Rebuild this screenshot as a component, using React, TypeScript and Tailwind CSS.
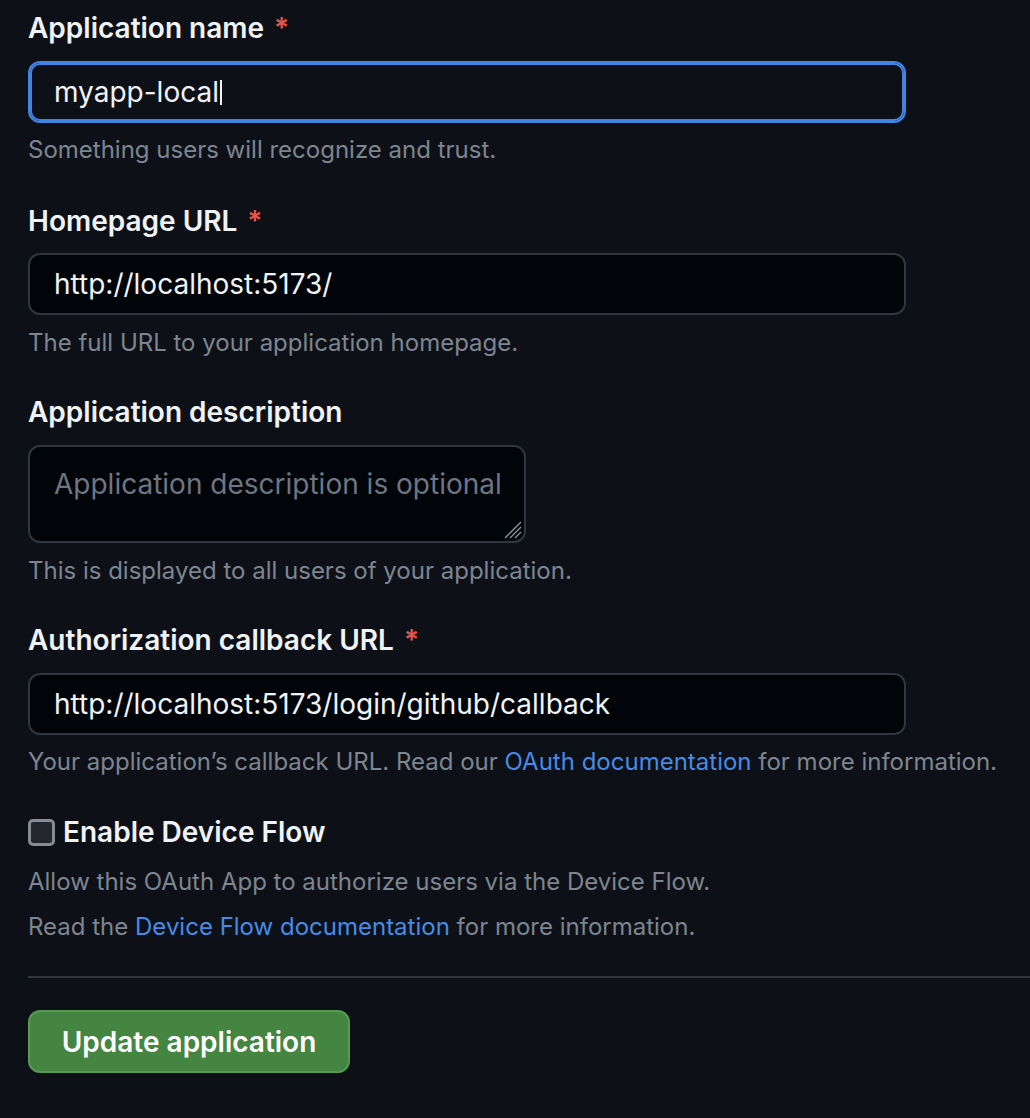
import React from "react";

const font = { fontFamily: "Inter, 'Noto Sans', sans-serif" };

function Label({ children, required }: { children: React.ReactNode; required?: boolean }) {
  return (
    <div className="text-[28px] leading-[36px] font-semibold text-[#f0f3f6]">
      {children}
      {required && <span className="ml-[10px] text-[#e5534b]">*</span>}
    </div>
  );
}

function Help({ children, className = "" }: { children: React.ReactNode; className?: string }) {
  return <div className={"text-[24px] leading-[32px] text-[#7d8590] " + className}>{children}</div>;
}

function Input({ value, focused }: { value: string; focused?: boolean }) {
  return (
    <div
      className={
        "w-[878px] h-[62px] rounded-[12px] flex items-center text-[28px] text-[#f0f3f6] " +
        (focused
          ? "border-2 border-[#4184e4] shadow-[inset_0_0_0_2px_#4184e4] bg-[#0d1117] pl-[24px]"
          : "border-2 border-[#30363d] bg-[#010409] pl-[24px]")
      }
    >
      <span>{value}</span>
      {focused && <span className="ml-[1px] w-[2px] h-[25px] bg-[#f0f3f6]" />}
    </div>
  );
}

export default function App() {
  return (
    <div className="min-h-[1118px] bg-[#0d1117] pl-[28px] pt-[10px]" style={font}>
      <Label required>Application name</Label>
      <div className="mt-[15px]">
        <Input value="myapp-local" focused />
      </div>
      <Help className="mt-[11px]">Something users will recognize and trust.</Help>

      <div className="mt-[37px]">
        <Label required>Homepage URL</Label>
      </div>
      <div className="mt-[14px]">
        <Input value="http://localhost:5173/" />
      </div>
      <Help className="mt-[12px]">The full URL to your application homepage.</Help>

      <div className="mt-[35px]">
        <Label>Application description</Label>
      </div>
      <div className="mt-[15px] relative w-[498px] h-[98px] rounded-[12px] border-2 border-[#30363d] bg-[#010409] pl-[24px] pt-[19px]">
        <div className="text-[28px] leading-[36px] text-[#6e7681] whitespace-nowrap">Application description is optional</div>
        <svg className="absolute right-[2px] bottom-[2px]" width="22" height="22" viewBox="0 0 22 22">
          <line x1="21" y1="5" x2="5" y2="21" stroke="#8b949e" strokeWidth="1.3" />
          <line x1="21" y1="10" x2="10" y2="21" stroke="#8b949e" strokeWidth="1.3" />
          <line x1="21" y1="15" x2="15" y2="21" stroke="#8b949e" strokeWidth="1.3" />
        </svg>
      </div>
      <Help className="mt-[12px]">This is displayed to all users of your application.</Help>

      <div className="mt-[35px]">
        <Label required>Authorization callback URL</Label>
      </div>
      <div className="mt-[15px]">
        <Input value="http://localhost:5173/login/github/callback" />
      </div>
      <Help className="mt-[11px]">
        Your application’s callback URL. Read our{" "}
        <span className="text-[#478be6]">OAuth documentation</span> for more information.
      </Help>

      <div className="mt-[36px] flex items-center h-[36px]">
        <div className="w-[27px] h-[27px] rounded-[5px] border-[3px] border-[#868b94] bg-[#24262e]" />
        <span className="ml-[8px] text-[28px] leading-[36px] font-semibold text-[#f0f3f6]">Enable Device Flow</span>
      </div>
      <Help className="mt-[16px]">Allow this OAuth App to authorize users via the Device Flow.</Help>
      <Help className="mt-[13px]">
        Read the <span className="text-[#478be6]">Device Flow documentation</span> for more information.
      </Help>

      <div className="mt-[33px] h-[2px] bg-[#30363d]" />

      <button className="mt-[32px] h-[63px] w-[322px] rounded-[12px] border-2 border-[#579a50] bg-[#448541] text-[28px] font-semibold text-white flex items-center justify-center">
        Update application
      </button>
    </div>
  );
}
